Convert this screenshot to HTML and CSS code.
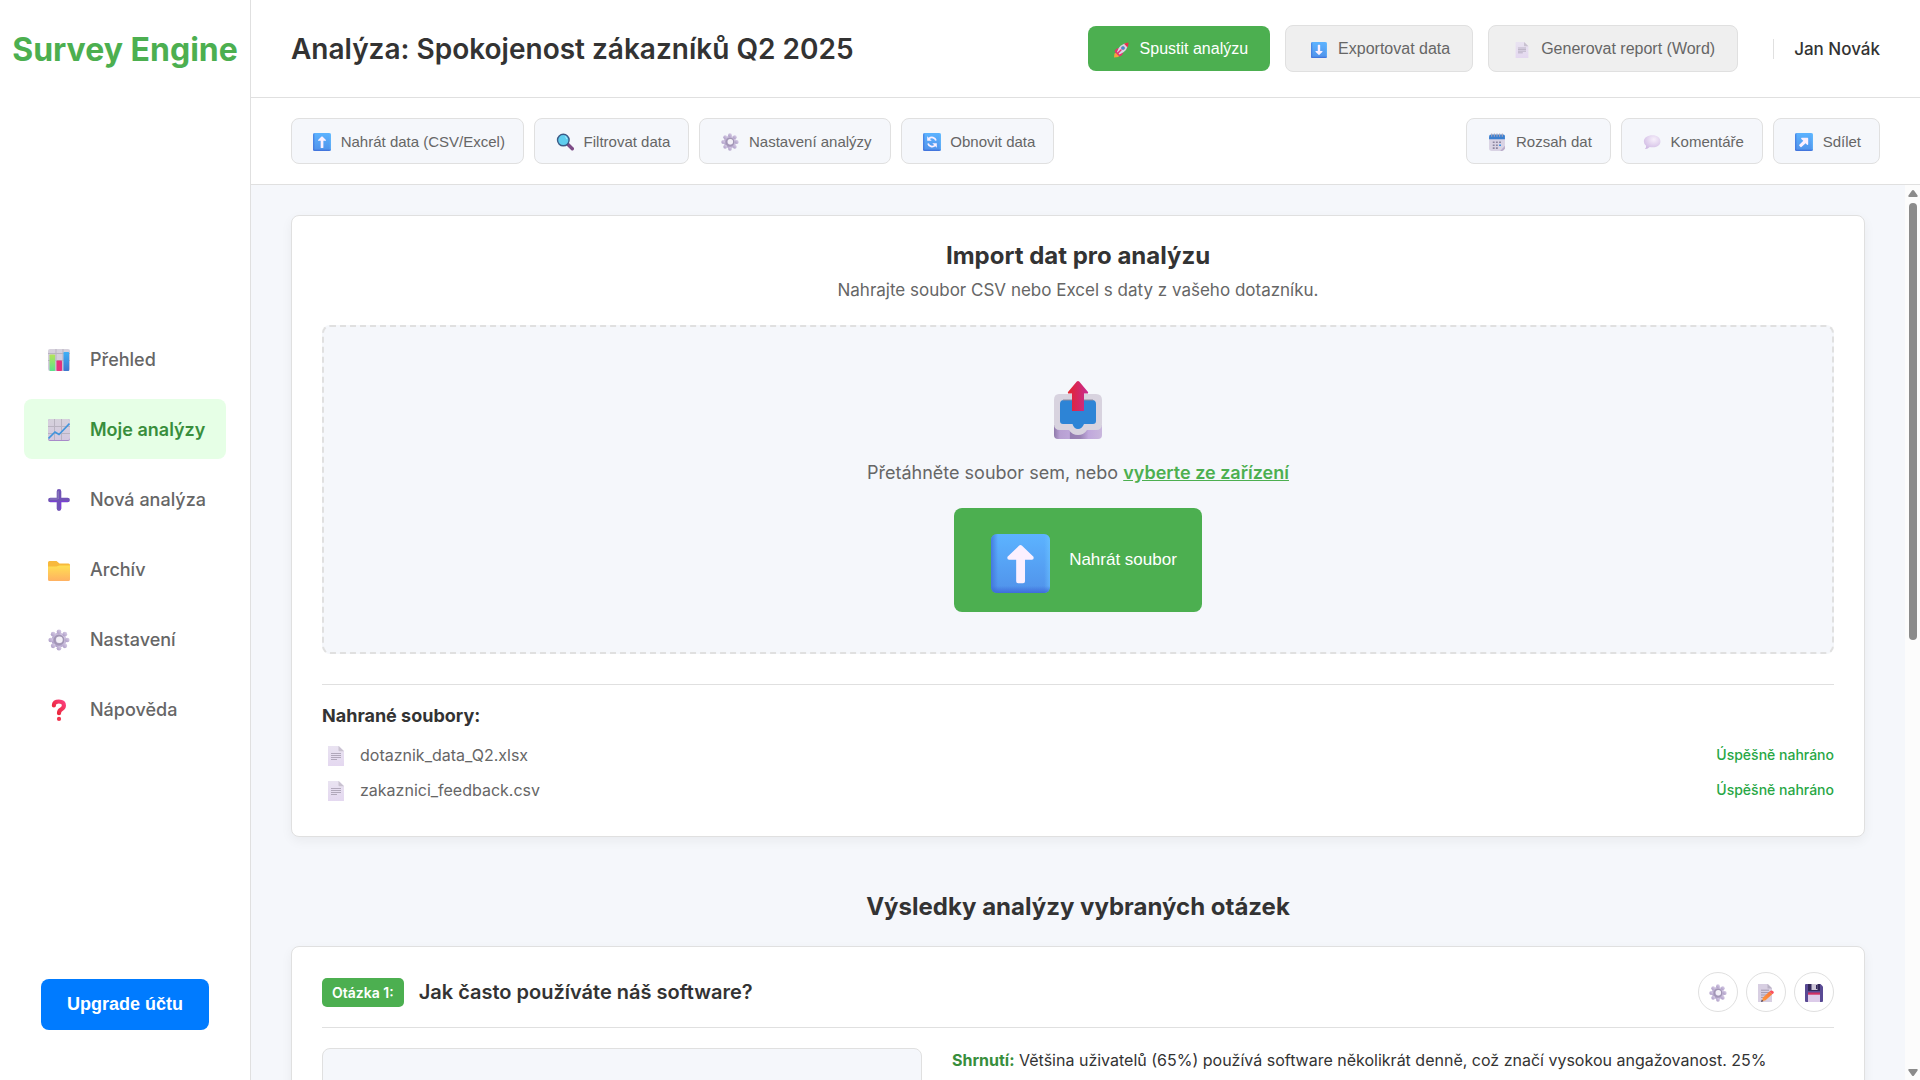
FILE: index.html
```html
<!DOCTYPE html>
<html lang="cs">
<head>
<meta charset="utf-8">
<title>Survey Engine</title>
<link rel="stylesheet" href="styles.css">
</head>
<body>
<svg class="defs" width="0" height="0" aria-hidden="true">
  <defs>
    <linearGradient id="gBlue" x1="0" y1="0" x2="0" y2="1"><stop offset="0" stop-color="#5cb3ff"/><stop offset="1" stop-color="#5092ea"/></linearGradient>
    <linearGradient id="gEdge" x1="0" y1="0" x2="1" y2="0"><stop offset="0" stop-color="#3f6fd9" stop-opacity=".8"/><stop offset=".12" stop-color="#3f6fd9" stop-opacity="0"/><stop offset=".9" stop-color="#6cc4ff" stop-opacity="0"/><stop offset="1" stop-color="#6cc4ff" stop-opacity=".6"/></linearGradient>
    <linearGradient id="gFoot" x1="0" y1="0" x2="0" y2="1"><stop offset=".88" stop-color="#3b66d6" stop-opacity="0"/><stop offset="1" stop-color="#3b66d6" stop-opacity=".85"/></linearGradient>
    <linearGradient id="gGear" x1="1" y1="0" x2="0" y2="1"><stop offset="0" stop-color="#ddd3ea"/><stop offset="1" stop-color="#a796c2"/></linearGradient>
    <linearGradient id="gPaper" x1="0" y1="0" x2="0" y2="1"><stop offset="0" stop-color="#e9e3f1"/><stop offset="1" stop-color="#e4d8f0"/></linearGradient>
    <linearGradient id="gGrid" x1="0" y1="0" x2="0" y2="1"><stop offset="0" stop-color="#d6d1dc"/><stop offset="1" stop-color="#d3c8e0"/></linearGradient>
    <linearGradient id="gGreen" x1="0" y1="0" x2="0" y2="1"><stop offset="0" stop-color="#b4e35a"/><stop offset="1" stop-color="#5be28c"/></linearGradient>
    <linearGradient id="gBar" x1="0" y1="0" x2="0" y2="1"><stop offset="0" stop-color="#3fb0f7"/><stop offset="1" stop-color="#3f78cf"/></linearGradient>
    <linearGradient id="gFolder" x1="0" y1="0" x2="0" y2="1"><stop offset="0" stop-color="#ffdf52"/><stop offset="1" stop-color="#ffb162"/></linearGradient>
    <linearGradient id="gRed" x1="0" y1="0" x2="1" y2="0"><stop offset="0" stop-color="#e5232c"/><stop offset="1" stop-color="#c62c93"/></linearGradient>
    <linearGradient id="gAsk" x1="1" y1="0" x2="0" y2="1"><stop offset="0" stop-color="#fb3f7c"/><stop offset="1" stop-color="#e6222d"/></linearGradient>
    <linearGradient id="gTray" x1="0" y1="0" x2="1" y2="0"><stop offset="0" stop-color="#8f7aab"/><stop offset=".12" stop-color="#b79fd2"/><stop offset=".32" stop-color="#bda6d8"/><stop offset=".34" stop-color="#957eb2"/><stop offset=".55" stop-color="#9a83b5"/><stop offset=".72" stop-color="#c0a8dc"/><stop offset="1" stop-color="#c9b7dd"/></linearGradient>
    <radialGradient id="gBubble" cx=".6" cy=".3" r=".8"><stop offset="0" stop-color="#f7f0fb"/><stop offset="1" stop-color="#cdb6e2"/></radialGradient>
    <linearGradient id="gPencil" x1="0" y1="1" x2="1" y2="0"><stop offset="0" stop-color="#ff9b3c"/><stop offset="1" stop-color="#f8743a"/></linearGradient>

    <symbol id="tile" viewBox="0 0 30 30"><rect width="30" height="30" rx="3" fill="url(#gBlue)"/><rect width="30" height="30" rx="3" fill="url(#gEdge)"/><rect width="30" height="30" rx="3" fill="url(#gFoot)"/></symbol>
    <symbol id="up" viewBox="0 0 30 30"><use href="#tile" width="30" height="30"/><path d="M14.2 6Q15 5.3 15.8 6L21.6 11.6Q22 13 20.8 13.1H17.3V24Q17.3 25 16.3 25H13.8Q12.8 25 12.8 24V13.1H9.2Q8 13 8.4 11.6Z" fill="#fbf0ff"/></symbol>
    <symbol id="down" viewBox="0 0 30 30"><use href="#tile" width="30" height="30"/><path transform="rotate(180 15 15)" d="M14.2 6Q15 5.3 15.8 6L21.6 11.6Q22 13 20.8 13.1H17.3V24Q17.3 25 16.3 25H13.8Q12.8 25 12.8 24V13.1H9.2Q8 13 8.4 11.6Z" fill="#fbf0ff"/></symbol>
    <symbol id="share" viewBox="0 0 30 30"><use href="#tile" width="30" height="30"/><path d="M11 8H21Q22 8 22 9V19Q21 20.4 20 19.4L17.6 17L10.8 23.4Q10 24 9.2 23.2L7.2 21.2Q6.4 20.4 7.2 19.6L13.8 13L10.4 9.8Q9.800 8.600 11 8Z" fill="#fbf0ff"/></symbol>
    <symbol id="refresh" viewBox="0 0 30 30"><use href="#tile" width="30" height="30"/><path d="M8.400 17.500A7 7 0 0 0 20 20.600M21.600 12.500A7 7 0 0 0 10 9.400" fill="none" stroke="#fbf0ff" stroke-width="3"/><path d="M7 5.500V13H14.500ZM23 24.500V17H15.500Z" fill="#fbf0ff"/></symbol>
    <symbol id="gear" viewBox="0 0 32 32"><g fill="url(#gGear)"><circle cx="16" cy="16" r="11"/><circle cx="16" cy="4" r="3.400"/><circle cx="24.500" cy="7.500" r="3.400"/><circle cx="28" cy="16" r="3.400"/><circle cx="24.500" cy="24.500" r="3.400"/><circle cx="16" cy="28" r="3.400"/><circle cx="7.500" cy="24.500" r="3.400"/><circle cx="4" cy="16" r="3.400"/><circle cx="7.500" cy="7.500" r="3.400"/></g><circle cx="16" cy="16" r="6.400" fill="none" stroke="#a296b5" stroke-width="3"/><circle cx="16.600" cy="15.600" r="4.800" fill="#f3f0f7"/></symbol>
    <symbol id="doc" viewBox="0 0 16 20"><path d="M0 0H11L16 5V20H0Z" fill="url(#gPaper)"/><path d="M10.500 0L16 5.300H11.500Q10.500 5.300 10.500 4.300Z" fill="#c9c2d0"/><path d="M3 7.500H13M3 9.500H13M3 11.500H13M3 13.500H9" stroke="#aaa2b4" stroke-width=".9"/></symbol>
    <symbol id="search" viewBox="0 0 32 32"><path d="M20 19L29 28" stroke="#7d4b86" stroke-width="6" stroke-linecap="round"/><circle cx="13" cy="12.500" r="10.300" fill="#5fcdee" stroke="#3c5a86" stroke-width="2.500"/><path d="M16 6Q19 8 19.500 11" stroke="#a5ecff" stroke-width="2" fill="none"/></symbol>
    <symbol id="rocket" viewBox="0 0 32 32"><path d="M2 31L3 23L9 20L13 24L11 30Z" fill="#f6a13c"/><path d="M3 19Q6 12 12 12L11 19L20 20Q20 27 13 29Z" fill="#e8326e"/><path d="M8 20Q12 4 29 2Q31 18 13 25Z" fill="#d9d3e4"/><path d="M22 3.500Q26 2 31 1Q31 6 29 11Z" fill="#ea2f4b"/><circle cx="20" cy="12" r="3.200" fill="#3d8fdb" stroke="#6d6b90"/><path d="M9 23L16 16" stroke="#e8326e" stroke-width="3" stroke-linecap="round"/></symbol>
    <symbol id="calendar" viewBox="0 0 32 34"><path d="M1 10H31V25L24 34H6Q1 34 1 29Z" fill="#d9d3e4"/><path d="M31 24L22 34H26Q30 33 31 29Z" fill="#b9acc9"/><path d="M1 12V7Q1 3 5 3H28Q31 3 31 6V12Z" fill="#3a7fd0"/><path d="M6 1V7M11 1V7M16 1V7M21 1V7M26 1V7" stroke="#a9a5b8" stroke-width="2"/><path d="M8 16h3.500v3H8zM14 16h3.500v3H14zM20 16h3.500v3H20zM8 21.500h3.500v3H8zM14 21.500h3.500v3H14zM8 27h3.500v3H8zM14 27h3.500v3H14z" fill="#8c86a0"/><path d="M20 21.500h3.500v3H20z" fill="#2f8fe6"/></symbol>
    <symbol id="bubble" viewBox="0 0 32 32"><path d="M17 4C25 4 31 8.500 31 15C31 21.500 25 25.500 17 25.500Q14 25.500 12 25Q8 29 3.500 28.500Q6 26 5.500 22.500Q1.500 19.500 1.500 15C1.500 8.500 8 4 17 4Z" fill="url(#gBubble)"/></symbol>
    <symbol id="bars" viewBox="0 0 22 22"><rect width="22" height="22" rx="2" fill="url(#gGrid)"/><path d="M0 4.500H22M0 11.500H22M8 0V22M15 0V22" stroke="#b9b3c1" stroke-width="1"/><rect x="1.500" y="5.500" width="5.600" height="16.500" rx=".8" fill="url(#gGreen)"/><rect x="8.500" y="11.500" width="5.500" height="10.500" rx=".8" fill="#e6317c"/><rect x="15.500" y="3" width="5.600" height="19" rx=".8" fill="url(#gBar)"/></symbol>
    <symbol id="chart" viewBox="0 0 22 22"><rect width="22" height="22" rx="2" fill="#a88bc9"/><rect width="22" height="21" rx="2" fill="url(#gGrid)"/><path d="M0 7.500H22M0 14.500H22M6.500 0V21M13.500 0V21" stroke="#b9b3c1" stroke-width="1"/><path d="M.5 19.500L7 13L11 15.500L21.500 4.500" fill="none" stroke="#4194dc" stroke-width="1.700"/></symbol>
    <symbol id="plus" viewBox="0 0 22 22"><path d="M11 2.400V19.600M2.400 11H19.600" stroke="#7153b6" stroke-width="4.600" stroke-linecap="round"/><path d="M10.200 2.500V9.500M2.500 10H9" stroke="#8b80b9" stroke-width="1.200" stroke-linecap="round"/><path d="M2.500 12.500H9M13 12.500H19.500M12.500 13V19.500" stroke="#7b3fd6" stroke-width="1.200" stroke-linecap="round"/></symbol>
    <symbol id="folder" viewBox="0 0 22 22"><path d="M0 3.500Q0 2 1.500 2H8.500L11.500 4.500H20.500Q22 4.500 22 6V12H0Z" fill="#f8b93c"/><path d="M0 7.500H8.500L11.500 6.500H22V20.500Q22 22 20.500 22H1.500Q0 22 0 20.500Z" fill="url(#gFolder)"/></symbol>
    <symbol id="ask" viewBox="0 0 22 22"><path d="M5.900 6.500Q5.900 2.500 10.900 2.500Q15.900 2.500 15.900 6.500Q15.900 9 13.300 10.300Q11 11.500 11 14.200" fill="none" stroke="url(#gAsk)" stroke-width="4.200" stroke-linecap="round"/><circle cx="11" cy="19.900" r="2.100" fill="#f0344e"/></symbol>
    <symbol id="outbox" viewBox="0 0 48 58"><path d="M0 44H48V54Q48 58 44 58H4Q0 58 0 54Z" fill="url(#gTray)"/><path d="M5 13H42Q48 13 48 19V43Q48 49 42 49H33Q30 54 24 54Q18 54 15 49H6Q0 49 0 43V19Q0 13 5 13Z" fill="#d8d3df"/><path d="M10 19H38Q42 19 42 23V40Q42 43 39 43H30Q28 48 24 48Q20 48 18.500 43H9Q6 43 6 40V23Q6 19 10 19Z" fill="#2d84d6"/><path d="M9 19H39" stroke="#8d8a9f" stroke-width="1"/><path d="M22.800 .6Q24 -.5 25.200 .6L34 11Q34.500 12.500 33 12.500H30V30H18V12.500H15Q13.500 12.500 14 11Z" fill="url(#gRed)"/></symbol>
    <symbol id="memo" viewBox="0 0 18 18"><path d="M1 0H11L15 4V18H1Z" fill="#d8cfe2"/><path d="M10.500 0L15 4.500H10.500Z" fill="#b9b1c4"/><path d="M4 6.200H12M4 8.600H12M4 11H10M4 13.400H8" stroke="#9a92a8" stroke-width=".9"/><path d="M4.800 17.200L6 13.600L12.500 7.600L15.200 10.300L8.600 16.200Z" fill="url(#gPencil)"/><path d="M12.500 7.600L14.200 6.500Q17 6.500 16.800 9L15.200 10.300Z" fill="#fb4f5c"/><path d="M4 18L4.800 15.600L6.400 17.200Z" fill="#4a3d50"/></symbol>
    <symbol id="save" viewBox="0 0 18 18"><path d="M0 1Q0 0 1 0H15.500L18 2.500V17Q18 18 17 18H1Q0 18 0 17Z" fill="#594a94"/><path d="M3 0H15V7H3Z" fill="#33285a"/><path d="M6.500 0H12.500V6H6.500Z" fill="#cfc8d8"/><path d="M11 1H12.500V5H11Z" fill="#33285a"/><path d="M3 9H15V18H3Z" fill="#dccbe9"/><path d="M3 8.500H15V10.700H3Z" fill="#cf2f63"/></symbol>
  </defs>
</svg>

<div class="app">
  <aside class="sidebar">
    <div class="logo">Survey Engine</div>
    <nav class="nav">
      <a class="nav-item"><svg><use href="#bars"/></svg><span>Přehled</span></a>
      <a class="nav-item active"><svg><use href="#chart"/></svg><span>Moje analýzy</span></a>
      <a class="nav-item"><svg><use href="#plus"/></svg><span>Nová analýza</span></a>
      <a class="nav-item"><svg><use href="#folder"/></svg><span>Archív</span></a>
      <a class="nav-item"><svg><use href="#gear"/></svg><span>Nastavení</span></a>
      <a class="nav-item"><svg><use href="#ask"/></svg><span>Nápověda</span></a>
    </nav>
    <button class="upgrade">Upgrade účtu</button>
  </aside>

  <main class="main">
    <header class="header">
      <h1>Analýza: Spokojenost zákazníků Q2 2025</h1>
      <div class="header-actions">
        <button class="btn primary"><svg><use href="#rocket"/></svg><span>Spustit analýzu</span></button>
        <button class="btn outline"><svg><use href="#down"/></svg><span>Exportovat data</span></button>
        <button class="btn outline"><svg><use href="#doc"/></svg><span>Generovat report (Word)</span></button>
        <div class="user">Jan Novák</div>
      </div>
    </header>

    <div class="toolbar">
      <div class="tools">
        <button class="tool"><svg><use href="#up"/></svg><span>Nahrát data (CSV/Excel)</span></button>
        <button class="tool"><svg><use href="#search"/></svg><span>Filtrovat data</span></button>
        <button class="tool"><svg><use href="#gear"/></svg><span>Nastavení analýzy</span></button>
        <button class="tool"><svg><use href="#refresh"/></svg><span>Obnovit data</span></button>
      </div>
      <div class="tools">
        <button class="tool"><svg><use href="#calendar"/></svg><span>Rozsah dat</span></button>
        <button class="tool"><svg><use href="#bubble"/></svg><span>Komentáře</span></button>
        <button class="tool"><svg><use href="#share"/></svg><span>Sdílet</span></button>
      </div>
    </div>

    <div class="scroller">
      <div class="content">
        <section class="card import">
          <h2>Import dat pro analýzu</h2>
          <p class="lead">Nahrajte soubor CSV nebo Excel s daty z vašeho dotazníku.</p>
          <div class="dropzone">
            <svg class="outbox"><use href="#outbox"/></svg>
            <p>Přetáhněte soubor sem, nebo <a>vyberte ze zařízení</a></p>
            <button class="btn upload"><svg><use href="#up"/></svg><span>Nahrát soubor</span></button>
          </div>
          <div class="files">
            <h3>Nahrané soubory:</h3>
            <div class="file"><svg><use href="#doc"/></svg><span>dotaznik_data_Q2.xlsx</span><span class="status">Úspěšně nahráno</span></div>
            <div class="file"><svg><use href="#doc"/></svg><span>zakaznici_feedback.csv</span><span class="status">Úspěšně nahráno</span></div>
          </div>
        </section>

        <h2 class="section-title">Výsledky analýzy vybraných otázek</h2>

        <section class="card question">
          <div class="question-head">
            <span class="badge">Otázka 1:</span>
            <h3>Jak často používáte náš software?</h3>
            <div class="round-actions">
              <button class="round"><svg><use href="#gear"/></svg></button>
              <button class="round"><svg><use href="#memo"/></svg></button>
              <button class="round"><svg><use href="#save"/></svg></button>
            </div>
          </div>
          <div class="question-body">
            <div class="plot"></div>
            <p class="summary"><strong>Shrnutí:</strong> Většina uživatelů (65%) používá software několikrát denně, což značí vysokou angažovanost. 25% uživatelů používá software týdně.</p>
          </div>
        </section>
      </div>
      <div class="scrollbar">
        <svg class="arrow" viewBox="0 0 10 7"><path d="M5 0Q5.600 0 6 .6L9.600 5.600Q10 7 9 7H1Q0 7 .4 5.600L4 .6Q4.400 0 5 0Z"/></svg>
        <div class="thumb"></div>
        <svg class="arrow down" viewBox="0 0 10 7"><path d="M5 7Q5.600 7 6 6.400L9.600 1.400Q10 0 9 0H1Q0 0 .4 1.400L4 6.400Q4.400 7 5 7Z"/></svg>
      </div>
    </div>
  </main>
</div>
</body>
</html>
```
FILE: styles.css
```css
* { box-sizing: border-box; }
body { margin: 0; font-family: Inter, sans-serif; color: #333; background: #f5f7fb; overflow: hidden; }
h1, h2, h3, p { margin: 0; }
svg { flex: none; display: block; }
.defs { position: absolute; }
button { font-family: "Liberation Sans", Arial, sans-serif; }

.app { display: flex; height: 1080px; }
.sidebar { width: 251px; flex: none; background: #fff; border-right: 1px solid #e0e0e0; display: flex; flex-direction: column; align-items: center; padding: 30px 0 50px; }
.logo { font-size: 32px; line-height: 39px; font-weight: 700; color: #4caf50; white-space: nowrap; }
.nav { display: flex; flex-direction: column; gap: 10px; width: 202px; margin-top: 260px; }
.nav-item { display: flex; align-items: center; gap: 20px; height: 60px; padding: 0 24px; border-radius: 8px; font-size: 18px; font-weight: 500; color: #666; white-space: nowrap; }
.nav-item svg { width: 22px; height: 22px; margin-top: 2px; }
.nav-item.active { background: #e6ffe6; color: #388e3c; font-weight: 600; }
.upgrade { width: 168px; height: 51px; margin-top: auto; border: 0; border-radius: 8px; background: #007bff; color: #fff; font-size: 18px; font-weight: 700; padding: 0; }

.main { flex: 1; min-width: 0; display: flex; flex-direction: column; }
.header { height: 98px; flex: none; display: flex; align-items: center; justify-content: space-between; padding: 0 40px; background: #fff; border-bottom: 1px solid #e0e0e0; }
h1 { font-size: 28px; line-height: 34px; font-weight: 600; }
.header-actions { display: flex; align-items: center; gap: 15px; }
.btn { display: flex; align-items: center; gap: 11px; border: 0; border-radius: 8px; font-size: 16px; white-space: nowrap; }
.btn svg { width: 16px; height: 16px; }
.primary { height: 45px; padding: 0 22px 0 25px; background: #4caf50; color: #fff; }
.primary svg, .outline svg { margin-top: 2px; }
.outline { height: 47px; padding: 0 22px 0 25px; background: #efefef; border: 1px solid #e0e0e0; color: #666; }
.user { margin-left: 20px; padding-left: 20px; border-left: 1px solid #e0e0e0; font-size: 17px; line-height: 20px; font-weight: 500; }

.toolbar { height: 87px; flex: none; display: flex; align-items: center; justify-content: space-between; padding: 0 40px; background: #fff; border-bottom: 1px solid #e0e0e0; }
.tools { display: flex; gap: 10px; }
.tool { display: flex; align-items: center; gap: 9.7px; height: 46px; padding: 0 18px 0 21px; border: 1px solid #e0e0e0; border-radius: 8px; background: #f5f7fb; color: #666; font-size: 15px; white-space: nowrap; }
.tool svg { width: 18px; height: 18px; margin-top: 2px; }

.scroller { flex: 1; min-height: 0; display: flex; overflow: hidden; }
.content { flex: 1; min-width: 0; padding: 30px 40px; }
.card { background: #fff; border: 1px solid #e0e0e0; border-radius: 8px; padding: 30px; box-shadow: 0 4px 12px rgba(0, 0, 0, .05); }
.import { height: 622px; padding-top: 25px; }
.import h2 { text-align: center; font-size: 24px; line-height: 30px; font-weight: 700; }
.lead { margin-top: 8px; text-align: center; font-size: 17px; line-height: 22px; color: #666; }
.dropzone { margin-top: 24px; height: 329px; border: 2px dashed #e0e0e0; border-radius: 8px; background: #f5f7fb; display: flex; flex-direction: column; align-items: center; padding-top: 54px; }
.outbox { width: 48px; height: 58px; }
.dropzone p { margin: 21px 0 23px; font-size: 18px; line-height: 25px; color: #666; }
.dropzone a { color: #4caf50; font-weight: 600; text-decoration: underline; }
.upload { height: 104px; padding: 0 25px 0 37px; gap: 19px; background: #4caf50; color: #fff; font-size: 17px; }
.upload svg { width: 59px; height: 59px; margin-top: 7px; }
.files { margin-top: 30px; border-top: 1px solid #e0e0e0; padding-top: 20px; }
.files h3 { font-size: 18px; line-height: 22px; font-weight: 700; margin-bottom: 11px; }
.file { display: flex; align-items: center; height: 35px; padding-left: 6px; font-size: 16px; color: #666; }
.file svg { width: 16px; height: 20px; margin-right: 16px; }
.file span { margin-bottom: 2px; }
.status { margin-left: auto; font-size: 14px; font-weight: 500; color: #28a745; }

.section-title { margin: 55px 0 25px; text-align: center; font-size: 24px; line-height: 29px; font-weight: 700; }
.question { height: 400px; padding-top: 25px; }
.question-head { display: flex; align-items: center; height: 56px; padding-bottom: 15px; border-bottom: 1px solid #e0e0e0; }
.badge { padding: 0 10px; height: 29px; line-height: 29px; border-radius: 5px; background: #4caf50; color: #fff; font-size: 14px; font-weight: 600; }
.question-head h3 { margin-left: 15px; font-size: 20px; line-height: 24px; font-weight: 600; }
.round-actions { display: flex; gap: 8px; margin-left: auto; }
.round { width: 40px; height: 40px; border: 1px solid #e0e0e0; border-radius: 50%; background: #fff; padding: 0; display: flex; align-items: center; justify-content: center; }
.round svg { width: 18px; height: 18px; margin-top: 2px; }
.question-body { display: flex; gap: 30px; padding-top: 20px; }
.plot { width: 600px; height: 300px; flex: none; border: 1px solid #e0e0e0; border-radius: 8px; background: #f5f7fb; }
.summary { margin-top: -1px; font-size: 16px; line-height: 27.2px; }
.summary strong { color: #388e3c; font-weight: 700; }

.scrollbar { width: 15px; flex: none; background: #fcfcfc; display: flex; flex-direction: column; align-items: center; padding: 5px 0 4px; }
.arrow { width: 10px; height: 7px; fill: #8b8b8b; }
.arrow.down { margin-top: auto; }
.thumb { width: 8px; height: 437px; margin-top: 6px; border-radius: 4px; background: #8b8b8b; }
```
